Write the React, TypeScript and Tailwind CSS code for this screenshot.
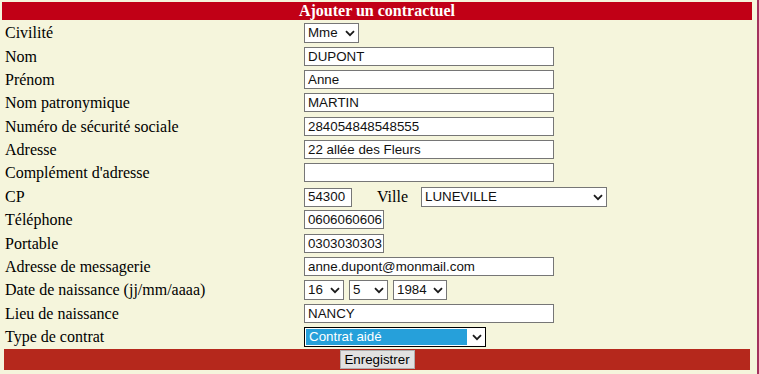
const serif = "font-['Liberation_Serif','Times_New_Roman',serif]";
const sans = "font-['Liberation_Sans',Arial,sans-serif]";

function Chevron() {
  return (
    <svg width="10" height="7" viewBox="0 0 10 7" className="shrink-0" aria-hidden>
      <polyline points="1,1.2 5,5.2 9,1.2" fill="none" stroke="#1a1a1a" strokeWidth="1.8" />
    </svg>
  );
}

function TextBox({ value, width = "w-[250px]" }: { value: string; width?: string }) {
  return (
    <div
      className={`${width} ${sans} flex h-[19px] items-center overflow-hidden whitespace-nowrap border border-[#767676] bg-white pl-[3px] text-[13.33px] text-[#111]`}
    >
      {value}
    </div>
  );
}

function PhoneBox({ value }: { value: string }) {
  return (
    <div
      className={`${sans} flex h-[19px] w-[80px] items-center justify-end overflow-hidden whitespace-nowrap border border-[#767676] bg-white pr-[1px] text-[13.33px] text-[#111]`}
    >
      {value}
    </div>
  );
}

function SelectBox({ value, width }: { value: string; width: string }) {
  return (
    <div
      className={`${width} ${sans} flex h-[20px] items-center justify-between border border-[#767676] bg-white pl-[3px] pr-[3px] text-[13.33px] text-[#111]`}
    >
      <span>{value}</span>
      <Chevron />
    </div>
  );
}

const rows: { label: string; h: string; field: React.ReactNode }[] = [
  { label: "Civilité", h: "h-[24px]", field: <SelectBox value="Mme" width="w-[55px]" /> },
  { label: "Nom", h: "h-[23px]", field: <TextBox value="DUPONT" /> },
  { label: "Prénom", h: "h-[23px]", field: <TextBox value="Anne" /> },
  { label: "Nom patronymique", h: "h-[24px]", field: <TextBox value="MARTIN" /> },
  { label: "Numéro de sécurité sociale", h: "h-[23px]", field: <TextBox value="284054848548555" /> },
  { label: "Adresse", h: "h-[23px]", field: <TextBox value="22 allée des Fleurs" /> },
  { label: "Complément d'adresse", h: "h-[24px]", field: <TextBox value="" /> },
  {
    label: "CP",
    h: "h-[23px]",
    field: (
      <div className="flex items-center">
        <TextBox value="54300" width="w-[48px]" />
        <span className={`${serif} ml-[25px] mr-[13px] text-[16px] leading-[18px] text-black`}>Ville</span>
        <SelectBox value="LUNEVILLE" width="w-[186px]" />
      </div>
    ),
  },
  { label: "Téléphone", h: "h-[24px]", field: <PhoneBox value="0606060606" /> },
  { label: "Portable", h: "h-[23px]", field: <PhoneBox value="0303030303" /> },
  { label: "Adresse de messagerie", h: "h-[23px]", field: <TextBox value="anne.dupont@monmail.com" /> },
  {
    label: "Date de naissance (jj/mm/aaaa)",
    h: "h-[24px]",
    field: (
      <div className="flex items-center gap-[5px]">
        <SelectBox value="16" width="w-[40px]" />
        <SelectBox value="5" width="w-[39px]" />
        <SelectBox value="1984" width="w-[54px]" />
      </div>
    ),
  },
  { label: "Lieu de naissance", h: "h-[23px]", field: <TextBox value="NANCY" /> },
  {
    label: "Type de contrat",
    h: "h-[25px]",
    field: (
      <div
        className={`${sans} flex h-[20px] w-[182px] items-center border border-black bg-white pl-[1px] pr-[3px] text-[13.33px]`}
      >
        <span className="flex h-[16px] w-[161px] items-center bg-[#26a0da] pl-[3px] text-white">Contrat aidé</span>
        <span className="ml-auto">
          <Chevron />
        </span>
      </div>
    ),
  },
];

export default function App() {
  return (
    <div className="h-[374px] w-[759px] border-r-2 border-[#a3325f] bg-[#f5f5dc]">
      <div className="pl-[2px] pt-[2px]">
        <div
          className={`${serif} flex h-[18px] w-[750px] items-center justify-center bg-[#c10016] text-[16px] font-bold leading-[18px] text-white`}
        >
          Ajouter un contractuel
        </div>
        {rows.map((r) => (
          <div key={r.label} className={`flex items-start pt-[3px] ${r.h}`}>
            <div
              className={`${serif} flex h-[20px] w-[302px] shrink-0 items-center pl-[3px] text-[16px] leading-[18px] text-black`}
            >
              {r.label}
            </div>
            {r.field}
          </div>
        ))}
        <div className="ml-[2px] flex h-[21px] w-[746px] items-center justify-center bg-[#b5281c]">
          <button
            type="button"
            className={`${sans} flex h-[19px] w-[75px] items-center justify-center border border-[#adadad] bg-[#e1e1e1] text-[13.33px] text-black`}
          >
            Enregistrer
          </button>
        </div>
      </div>
    </div>
  );
}
